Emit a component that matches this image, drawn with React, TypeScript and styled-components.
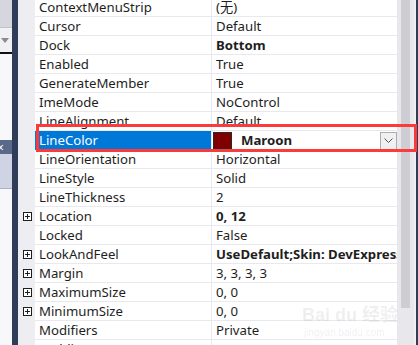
import React from "react";
import styled, { createGlobalStyle } from "styled-components";

const Global = createGlobalStyle`
  html, body { margin: 0; padding: 0; overflow: hidden; background: #ffffff; }
  #root { width: 418px; height: 345px; }
`;

const Frame = styled.div`
  display: flex;
  width: 418px;
  height: 345px;
  overflow: hidden;
  font-family: "Noto Sans", "Noto Sans CJK SC", sans-serif;
  font-size: 13.2px;
  color: #1e1e1e;
  position: relative;
`;

const SidePanel = styled.div`
  width: 12px;
  flex: none;
  display: flex;
  flex-direction: column;
  background: #f7f7f9;
`;

const SideHeader = styled.div`
  height: 28px;
  background: #d6d6de;
  border-bottom: 1px solid #c2c2ca;
`;

const SideDropRow = styled.div`
  height: 24px;
  background: #f1f1f4;
  display: flex;
  align-items: center;
  padding-left: 1px;
`;

const SideRule = styled.div`
  height: 2px;
  background: #111;
`;

const SideBlank = styled.div<{ $h: number }>`
  height: ${(p) => p.$h}px;
  background: #f8f8fa;
`;

const SideTab = styled.div`
  height: 15px;
  background: #58698a;
  color: #fff;
  font-size: 12px;
  line-height: 15px;
  overflow: hidden;
  text-indent: -3px;
`;

const SideTabBody = styled.div`
  height: 34px;
  background: #cfd3e3;
  border-bottom: 1px solid #aab1c8;
`;

const Navy = styled.div<{ $w: number }>`
  width: ${(p) => p.$w}px;
  flex: none;
  background: #2f3d5a;
`;

const Grid = styled.div`
  width: 379px;
  flex: none;
  display: flex;
  flex-direction: column;
  margin-top: -2px;
  background: #eeeef2;
`;

const Row = styled.div`
  display: grid;
  grid-template-columns: 17px 176px 1px 185px;
  height: 19px;
  flex: none;
  position: relative;
`;

const Gutter = styled.div`
  background: #eeeef2;
  display: flex;
  align-items: center;
  justify-content: flex-start;
  padding-left: 5px;
`;

const PlusBox = styled.div`
  width: 7px;
  height: 7px;
  border: 1px solid #1e1e1e;
  position: relative;
  background: #fff;
  &::before {
    content: "";
    position: absolute;
    left: 1px;
    right: 1px;
    top: 3px;
    height: 1px;
    background: #1e1e1e;
  }
  &::after {
    content: "";
    position: absolute;
    top: 1px;
    bottom: 1px;
    left: 3px;
    width: 1px;
    background: #1e1e1e;
  }
`;

const NameCell = styled.div<{ $sel?: boolean }>`
  background: ${(p) => (p.$sel ? "#0078d7" : "#ffffff")};
  color: ${(p) => (p.$sel ? "#ffffff" : "#1e1e1e")};
  border-bottom: 1px solid ${(p) => (p.$sel ? "#0078d7" : "#e8e8ee")};
  padding-left: 4px;
  padding-top: 1px;
  line-height: 17px;
  white-space: nowrap;
  overflow: hidden;
`;

const Sep = styled.div`
  background: #e8e8ee;
`;

const ValueCell = styled.div<{ $bold?: boolean }>`
  background: #ffffff;
  border-bottom: 1px solid #e8e8ee;
  padding-left: 4px;
  padding-top: 1px;
  line-height: 17px;
  white-space: nowrap;
  overflow: hidden;
  font-weight: ${(p) => (p.$bold ? 700 : 400)};
  display: flex;
  align-items: center;
`;

const Swatch = styled.div`
  width: 17px;
  height: 15px;
  background: #800000;
  border: 1px solid #2a2a2a;
  flex: none;
  margin-left: -3px;
  margin-right: 9px;
`;

const DropButton = styled.div`
  margin-left: auto;
  width: 15px;
  height: 16px;
  border: 1px solid #adadad;
  background: #f0f0f0;
  display: flex;
  align-items: center;
  justify-content: center;
  flex: none;
`;

const RedBox = styled.div`
  position: absolute;
  left: 18px;
  top: -7px;
  width: 381px;
  height: 28px;
  box-sizing: border-box;
  border: 3px solid #fb3b3b;
  z-index: 5;
  pointer-events: none;
`;

const Scroll = styled.div`
  width: 17px;
  flex: none;
  background: #e8e8ec;
  display: flex;
  justify-content: center;
`;

const Thumb = styled.div`
  width: 9px;
  height: 308px;
  background: #cdcdd3;
`;

const Edge = styled.div`
  width: 2px;
  flex: none;
  background: #f0f0f3;
`;

const Watermark = styled.div`
  position: absolute;
  left: 302px;
  top: 306px;
  color: rgba(120, 120, 130, 0.12);
  font-family: "Liberation Sans", "Noto Sans CJK SC", sans-serif;
  pointer-events: none;
  z-index: 4;
  line-height: 1;
  white-space: nowrap;
`;

const WmBig = styled.div`
  font-size: 18px;
  font-weight: 700;
`;

const WmSmall = styled.div`
  font-size: 10px;
  margin-top: 4px;
  margin-left: 2px;
`;

type Prop = { n: string; v: string; b?: boolean; x?: boolean; sel?: boolean };

const rows: Prop[] = [
  { n: "ContextMenuStrip", v: "(无)" },
  { n: "Cursor", v: "Default" },
  { n: "Dock", v: "Bottom", b: true },
  { n: "Enabled", v: "True" },
  { n: "GenerateMember", v: "True" },
  { n: "ImeMode", v: "NoControl" },
  { n: "LineAlignment", v: "Default" },
  { n: "LineColor", v: "Maroon", b: true, sel: true },
  { n: "LineOrientation", v: "Horizontal" },
  { n: "LineStyle", v: "Solid" },
  { n: "LineThickness", v: "2" },
  { n: "Location", v: "0, 12", b: true, x: true },
  { n: "Locked", v: "False" },
  { n: "LookAndFeel", v: "UseDefault;Skin: DevExpress Style", b: true, x: true },
  { n: "Margin", v: "3, 3, 3, 3", x: true },
  { n: "MaximumSize", v: "0, 0", x: true },
  { n: "MinimumSize", v: "0, 0", x: true },
  { n: "Modifiers", v: "Private" },
  { n: "Padding", v: "0, 0, 0, 0", x: true },
];

export default function App() {
  return (
    <>
      <Global />
      <Frame>
        <SidePanel>
          <SideHeader />
          <SideDropRow>
            <svg width="8" height="5" viewBox="0 0 8 5">
              <path d="M0 0 H8 L4 5 Z" fill="#8a8a96" />
            </svg>
          </SideDropRow>
          <SideRule />
          <SideBlank $h={88} />
          <SideTab>×</SideTab>
          <SideTabBody />
          <SideBlank $h={160} />
        </SidePanel>
        <Navy $w={6} />
        <Grid>
          {rows.map((r) => (
            <Row key={r.n}>
              <Gutter>{r.x && <PlusBox />}</Gutter>
              <NameCell $sel={r.sel}>{r.n}</NameCell>
              <Sep />
              <ValueCell $bold={r.b}>
                {r.sel ? (
                  <>
                    <Swatch />
                    {r.v}
                    <DropButton>
                      <svg width="9" height="5" viewBox="0 0 9 5">
                        <path d="M0.5 0.5 L4.5 4.5 L8.5 0.5" fill="none" stroke="#555" strokeWidth="1" />
                      </svg>
                    </DropButton>
                  </>
                ) : (
                  r.v
                )}
              </ValueCell>
              {r.sel && <RedBox />}
            </Row>
          ))}
        </Grid>
        <Scroll>
          <Thumb />
        </Scroll>
        <Edge />
        <Navy $w={2} />
        <Watermark>
          <WmBig>Bai du 经验</WmBig>
          <WmSmall>jingyan.baidu.com</WmSmall>
        </Watermark>
      </Frame>
    </>
  );
}
